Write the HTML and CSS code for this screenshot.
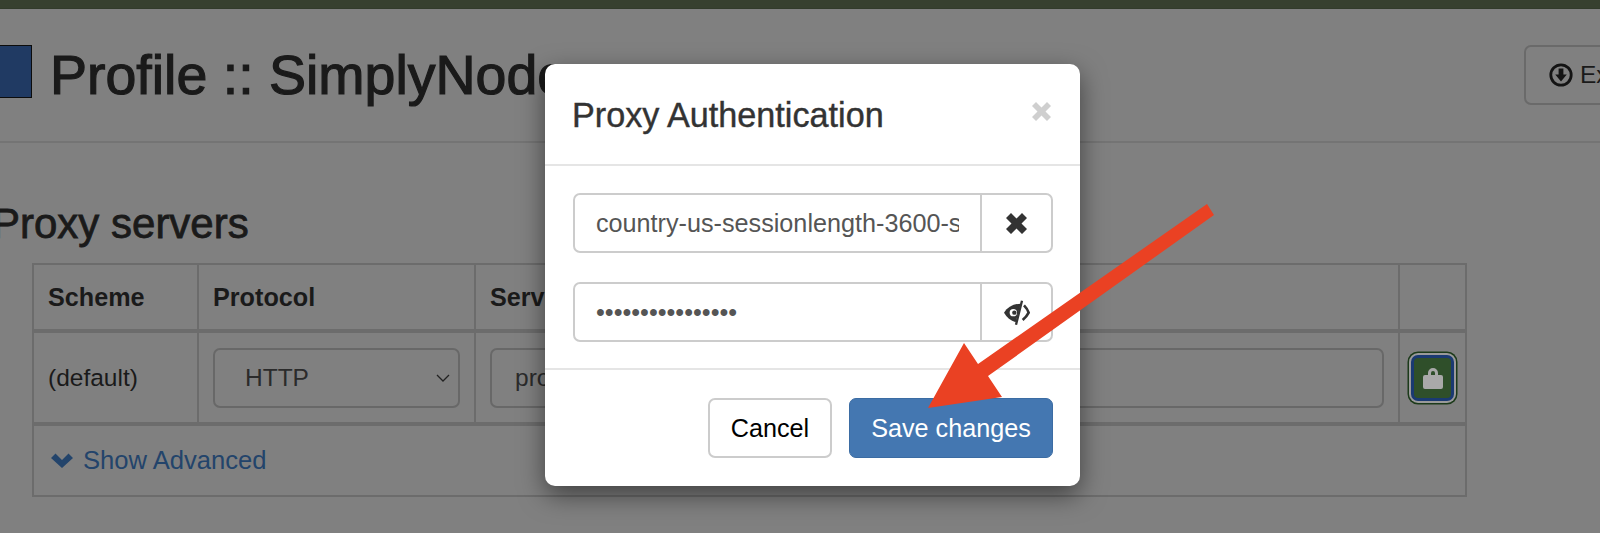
FILE: index.html

```html
<!DOCTYPE html>
<html lang="en">
<head>
  <meta charset="UTF-8">
  <title>Profile :: SimplyNode</title>
  <link rel="stylesheet" href="styles.css">
</head>
<body>

  <div class="topbar"></div>

  <header class="page-header">
    <span class="profile-icon"></span>
    <h1>Profile :: SimplyNode</h1>
    <button class="btn-export" type="button">
      <svg class="icon-download" viewBox="0 0 24 24">
        <circle cx="12" cy="12" r="10.2" fill="none" stroke="#141414" stroke-width="2.8"/>
        <path d="M9.6 5.5h4.8v6h3.4L12 18.4 6.200 11.500h3.400z" fill="#141414"/>
      </svg>
      Export
    </button>
  </header>

  <h3 class="section-title">Proxy servers</h3>

  <table class="proxy-table">
    <colgroup>
      <col class="col-scheme">
      <col class="col-protocol">
      <col class="col-server">
      <col class="col-auth">
    </colgroup>
    <thead>
      <tr>
        <th>Scheme</th>
        <th>Protocol</th>
        <th>Server</th>
        <th></th>
      </tr>
    </thead>
    <tbody>
      <tr>
        <td>(default)</td>
        <td>
          <select class="field field-select">
            <option>HTTP</option>
          </select>
        </td>
        <td><input class="field" type="text" value="proxy.simplynode.io"></td>
        <td>
          <button class="btn-lock" type="button">
            <svg class="icon-lock" viewBox="0 0 20 22">
              <path d="M5 8V6a5 5 0 0 1 10 0v2h3a2 2 0 0 1 2 2v10a2 2 0 0 1-2 2H2a2 2 0 0 1-2-2V10a2 2 0 0 1 2-2zm3 0h4V6a2 2 0 0 0-4 0z" fill="#a9a9a9"/>
            </svg>
          </button>
        </td>
      </tr>
      <tr>
        <td colspan="4" class="advanced-cell">
          <a class="advanced-link" href="#">
            <svg class="icon-chevron" viewBox="0 0 22 15">
              <path d="M0 5 4.500 0.500 11 7l6.500-6.500L22 5 11 15z" fill="#23446b"/>
            </svg>
            Show Advanced
          </a>
        </td>
      </tr>
    </tbody>
  </table>

  <div class="modal">
    <div class="modal-header">
      <h4>Proxy Authentication</h4>
      <button class="modal-close" type="button">
        <svg viewBox="0 0 19 19"><path d="M4 0l5.500 5.500L15 0l4 4-5.500 5.500L19 15l-4 4-5.500-5.500L4 19l-4-4 5.500-5.500L0 4z" fill="#cfcfcf"/></svg>
      </button>
    </div>
    <div class="modal-body">
      <div class="input-group">
        <input class="group-input" type="text" value="country-us-sessionlength-3600-session-abc123">
        <span class="addon">
          <svg class="icon-remove" viewBox="0 0 21 21"><path d="M5 0l5.500 5.500L16 0l5 5-5.500 5.500L21 16l-5 5-5.500-5.500L5 21l-5-5 5.500-5.500L0 5z" fill="#333"/></svg>
        </span>
      </div>
      <div class="input-group">
        <input class="group-input" type="password" value="abcdefghijklmnop">
        <span class="addon">
          <svg class="icon-eye" viewBox="0 0 78 75">
            <path d="M50 11C28 11 10 22 0 38c8 14 20 24 35 29z" fill="#333"/>
            <circle cx="28" cy="38" r="11" fill="#fff"/>
            <circle cx="31" cy="38" r="6.500" fill="#333"/>
            <path d="M54 2 36 74" stroke="#333" stroke-width="7" fill="none"/>
            <path d="M60 16Q70 26 74 38 68 50 56 60" stroke="#333" stroke-width="8" fill="none"/>
          </svg>
        </span>
      </div>
    </div>
    <div class="modal-footer">
      <button class="btn btn-default" type="button">Cancel</button>
      <button class="btn btn-primary" type="button">Save changes</button>
    </div>
  </div>

  <svg class="arrow" viewBox="0 0 1600 533">
    <polygon points="1207,204 1214,215 988,376 1002,397 928,408 964,343 978,364" fill="#ea4123"/>
  </svg>

</body>
</html>
```

FILE: styles.css

```css
* {
  box-sizing: border-box;
}

html, body {
  height: 533px;
}

body {
  margin: 0;
  position: relative;
  overflow: hidden;
  font-family: "Liberation Sans", Arial, sans-serif;
  font-size: 24.5px;
  color: #1a1a1a;
  background-color: #808080;
}

.topbar {
  height: 9px;
  background-color: #37402f;
  border-bottom: 1px solid #323b2b;
}

/* page behind the modal, dimmed colours */
.page-header {
  display: flex;
  align-items: flex-start;
  width: 1700px;
  height: 134px;
  margin-left: -30px;
  padding-top: 36px;
  border-bottom: 2px solid #747474;
}

.profile-icon {
  flex: none;
  width: 62px;
  height: 53px;
  background-color: #203a63;
  border: 1px solid #0c0c0c;
}

h1 {
  margin: 0 0 0 18px;
  font-size: 55.5px;
  font-weight: normal;
  line-height: 60px;
  white-space: nowrap;
  -webkit-text-stroke: 1.2px #1a1a1a;
}

.btn-export {
  flex: none;
  display: flex;
  align-items: center;
  gap: 7px;
  width: 190px;
  height: 60px;
  margin-left: auto;
  margin-right: -44px;
  padding: 0 0 0 23px;
  font: inherit;
  color: #1a1a1a;
  background: transparent;
  border: 2px solid #6a6a6a;
  border-radius: 7px;
}

.icon-download {
  flex: none;
  width: 24px;
  height: 24px;
}

.section-title {
  margin: 58px 0 0 -8px;
  font-size: 42px;
  font-weight: normal;
  line-height: 46px;
  -webkit-text-stroke: 0.8px #1a1a1a;
}

.proxy-table {
  width: 1433px;
  margin: 16px 0 0 32px;
  table-layout: fixed;
  border-collapse: collapse;
  border: 2px solid #6c6c6c;
}

.col-scheme { width: 165px; }
.col-protocol { width: 277px; }
.col-server { width: 924px; }
.col-auth { width: 67px; }

.proxy-table th, .proxy-table td {
  padding: 0 14px;
  text-align: left;
  border: 2px solid #6c6c6c;
}

.proxy-table th {
  height: 67px;
  font-size: 25.2px;
  border-bottom-width: 4px;
}

.proxy-table tbody tr:first-child td {
  height: 93px;
  border-bottom-width: 4px;
}

.proxy-table td.advanced-cell {
  height: 72px;
}

.field {
  display: block;
  width: 100%;
  height: 60px;
  padding: 0 23px;
  font: inherit;
  color: #2b2b2b;
  background-color: transparent;
  border: 2px solid #686868;
  border-radius: 7px;
  outline: none;
}

.field-select {
  padding-left: 30px;
  appearance: none;
  background-image: url("data:image/svg+xml,%3Csvg xmlns='http://www.w3.org/2000/svg' viewBox='0 0 14 8'%3E%3Cpath d='M1 1l6 6 6-6' fill='none' stroke='%23222' stroke-width='1.300'/%3E%3C/svg%3E");
  background-repeat: no-repeat;
  background-position: right 8px center;
  background-size: 14px 8px;
}

.btn-lock {
  display: flex;
  align-items: center;
  justify-content: center;
  width: 43px;
  height: 46px;
  margin-left: -3px;
  padding: 0;
  background-color: #2f4f2a;
  border: 3.500px solid #1a3a72;
  border-radius: 7px;
  box-shadow: 0 0 0 2px #9a9a9a, 0 0 0 3.500px #1c3a1a;
}

.icon-lock {
  flex: none;
  width: 20px;
  height: 22px;
}

.advanced-link {
  display: flex;
  align-items: center;
  gap: 10px;
  font-size: 25.6px;
  color: #23446b;
  text-decoration: none;
}

.icon-chevron {
  flex: none;
  width: 22px;
  height: 15px;
  margin-left: 3px;
}

/* modal */
.modal {
  position: absolute;
  left: 545px;
  top: 64px;
  width: 535px;
  height: 422px;
  color: #333;
  background-color: #fff;
  border-radius: 10px;
  box-shadow: 0 9px 26px rgba(0, 0, 0, 0.5);
}

.modal-header {
  display: flex;
  align-items: flex-start;
  justify-content: space-between;
  height: 102px;
  padding: 31px 29px 0 27px;
  border-bottom: 2px solid #e5e5e5;
}

.modal-header h4 {
  margin: 0;
  font-size: 34.2px;
  font-weight: normal;
  line-height: 40px;
  -webkit-text-stroke: 0.4px #333;
}

.modal-close {
  flex: none;
  width: 19px;
  height: 19px;
  margin-top: 7px;
  padding: 0;
  background: none;
  border: 0;
}

.modal-body {
  display: flex;
  flex-direction: column;
  gap: 29px;
  height: 204px;
  padding: 27px 27px 0 28px;
  border-bottom: 2px solid #e5e5e5;
}

.input-group {
  display: flex;
  height: 60px;
  border: 2px solid #ccc;
  border-radius: 7px;
}

.group-input {
  flex: 1;
  min-width: 0;
  padding: 1px 21px 0 21px;
  font: inherit;
  font-size: 25.2px;
  color: #555;
  background: none;
  border: 0;
  outline: none;
}

.addon {
  flex: none;
  display: flex;
  align-items: center;
  justify-content: center;
  width: 71px;
  border-left: 2px solid #ccc;
}

.icon-remove {
  width: 21px;
  height: 21px;
}

.icon-eye {
  width: 26px;
  height: 25px;
}

.modal-footer {
  display: flex;
  justify-content: flex-end;
  gap: 17px;
  padding: 28px 27px 0 0;
}

.btn {
  height: 60px;
  padding: 0;
  font: inherit;
  font-size: 25.2px;
  border-radius: 7px;
}

.btn-default {
  width: 124px;
  color: #000;
  background-color: #fff;
  border: 2px solid #ccc;
}

.btn-primary {
  width: 204px;
  color: #fff;
  background-color: #4477b1;
  border: 1px solid #3b6ca3;
}

.arrow {
  position: absolute;
  left: 0;
  top: 0;
  width: 1600px;
  height: 533px;
  pointer-events: none;
}
```
